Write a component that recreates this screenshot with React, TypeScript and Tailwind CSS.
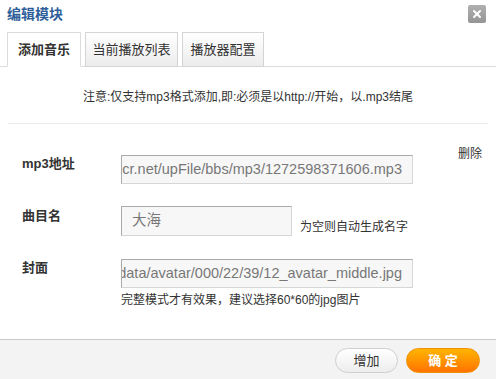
import { X } from 'lucide-react';

const font = { fontFamily: '"Liberation Sans", "Noto Sans CJK SC", sans-serif' };

const tabs = [
  { label: '添加音乐', width: 'w-[74px]', active: true },
  { label: '当前播放列表', width: 'w-[93px]', active: false },
  { label: '播放器配置', width: 'w-[82px]', active: false },
];

// text box that shows the end of a long value, like a scrolled input
function Field({ value, width, height, align = 'end' }: { value: string; width: string; height: string; align?: 'start' | 'end' }) {
  return (
    <div
      className={`${width} ${height} flex items-center overflow-hidden whitespace-nowrap border border-[#a9a9a9] border-r-[#d6d6d6] border-b-[#d6d6d6] bg-[#f7f7f7] text-[14.5px] text-[#777] ${
        align === 'end' ? 'justify-end pr-[10px]' : 'justify-start pl-[10px]'
      }`}
    >
      {value}
    </div>
  );
}

export default function App() {
  return (
    <div className="flex h-[379px] w-[496px] flex-col bg-white text-[#333]" style={font}>
      {/* Header */}
      <div className="flex h-[32px] items-start justify-between px-[7px] pt-[5px]">
        <h1 className="text-[14px] font-bold leading-[18px] text-[#2f5f9a]">编辑模块</h1>
        <button className="mr-[3px] flex h-[18px] w-[18px] items-center justify-center rounded-[2px] bg-gradient-to-b from-[#b0b0b0] to-[#959595]">
          <X size={12} strokeWidth={4} className="text-white" />
        </button>
      </div>

      {/* Tabs */}
      <div className="flex gap-[4px] border-b border-[#dcdcdc] pl-[7px]">
        {tabs.map((tab) => (
          <div
            key={tab.label}
            className={`${tab.width} -mb-px flex h-[35px] items-center justify-center border text-[13px] ${
              tab.active
                ? 'border-[#dcdcdc] border-b-white bg-white font-bold text-[#333]'
                : 'border-[#d4d4d4] bg-gradient-to-b from-white to-[#ececec] text-[#333]'
            }`}
          >
            {tab.label}
          </div>
        ))}
      </div>

      {/* Notice */}
      <p className="mt-[21px] text-center text-[12px] leading-[18px] text-[#333]">
        注意:仅支持mp3格式添加,即:必须是以http://开始，以.mp3结尾
      </p>
      <div className="mx-[8px] mt-[17px] border-t border-[#ebebeb]" />

      {/* Form */}
      <div className="flex pl-[22px] pr-[14px] pt-[31px]">
        <label className="w-[99px] text-[13px] font-bold leading-[18px]">mp3地址</label>
        <Field value="http://www.xxxecr.net/upFile/bbs/mp3/1272598371606.mp3" width="w-[292px]" height="h-[29px]" />
        <span className="ml-auto -mt-[10px] text-[12px] leading-[18px]">删除</span>
      </div>

      <div className="mt-[22px] flex items-start pl-[22px]">
        <label className="w-[99px] pt-px text-[13px] font-bold leading-[18px]">曲目名</label>
        <Field value="大海" width="w-[171px]" height="h-[30px]" align="start" />
        <span className="ml-[8px] self-end text-[12px] leading-[18px]">为空则自动生成名字</span>
      </div>

      <div className="mt-[23px] flex items-start pl-[22px]">
        <label className="w-[99px] text-[13px] font-bold leading-[18px]">封面</label>
        <div>
          <Field value="data/avatar/000/22/39/12_avatar_middle.jpg" width="w-[292px]" height="h-[29px]" />
          <p className="mt-[4px] text-[12px] leading-[16px]">完整模式才有效果，建议选择60*60的jpg图片</p>
        </div>
      </div>

      {/* Footer */}
      <div className="mt-auto flex h-[40px] items-start justify-end gap-[8px] border-t border-[#c9c9c9] bg-[#f3f3f3] pr-[16px] pt-[8px]">
        <button className="h-[25px] w-[63px] rounded-full border border-[#cfcfcf] bg-gradient-to-b from-white to-[#ededed] text-[13px] text-[#333]">
          增加
        </button>
        <button className="h-[25px] w-[74px] rounded-full border border-[#f39200] bg-gradient-to-b from-[#ffb400] to-[#ff7200] text-[13px] font-bold text-white">
          确 定
        </button>
      </div>
    </div>
  );
}
